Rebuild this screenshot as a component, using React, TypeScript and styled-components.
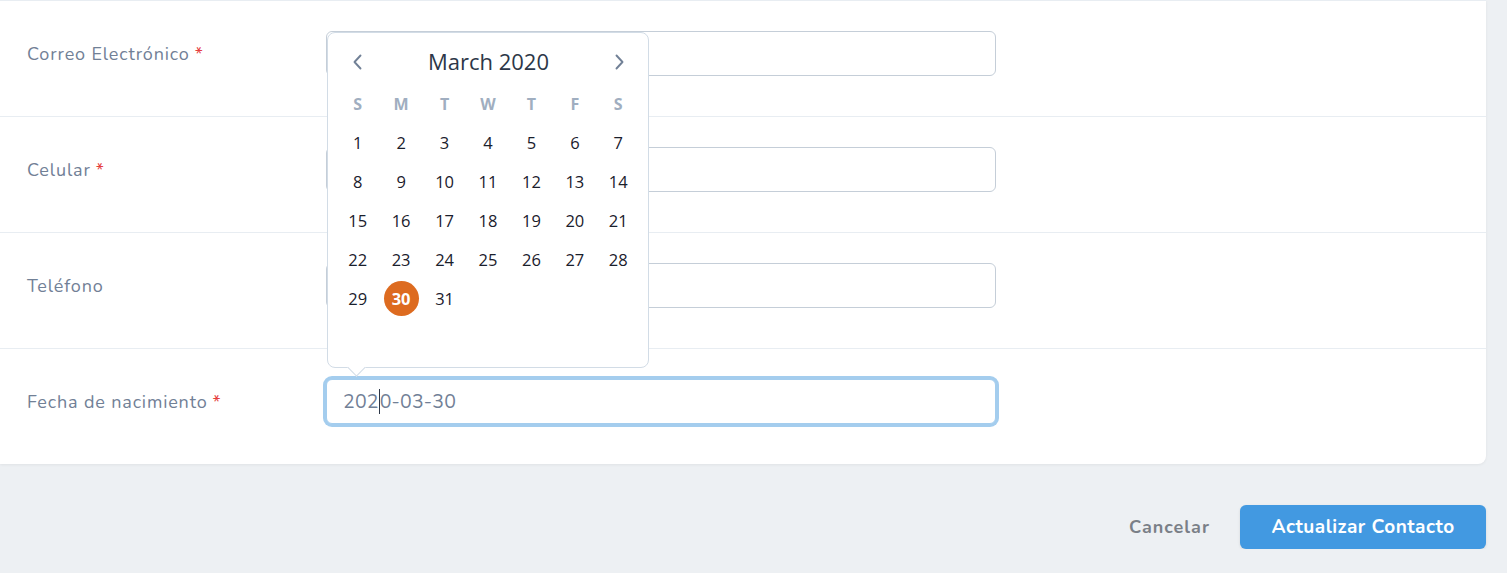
import React from "react";
import styled, { createGlobalStyle } from "styled-components";

const GlobalStyle = createGlobalStyle`
  body {
    margin: 0;
    background: #edf0f3;
    font-family: "Nunito", "Open Sans", sans-serif;
  }
`;

const fields = [
  { label: "Correo Electrónico", required: true, value: "" },
  { label: "Celular", required: true, value: "" },
  { label: "Teléfono", required: false, value: "" },
  { label: "Fecha de nacimiento", required: true, value: "2020-03-30", date: true },
];

const weekdays = ["S", "M", "T", "W", "T", "F", "S"];

const ChevronLeft = () => (
  <svg width="16" height="18" viewBox="0 0 16 18" fill="none">
    <path d="M10.5 2.5L4.5 9l6 6.5" stroke="#718096" strokeWidth="1.9" strokeLinecap="round" strokeLinejoin="round" />
  </svg>
);

const ChevronRight = () => (
  <svg width="16" height="18" viewBox="0 0 16 18" fill="none">
    <path d="M5.5 2.5l6 6.5-6 6.5" stroke="#718096" strokeWidth="1.9" strokeLinecap="round" strokeLinejoin="round" />
  </svg>
);

const Calendar: React.FC<{ selected: number }> = ({ selected }) => {
  // March 2020 starts on a Sunday, 6 rows shown
  const cells = Array.from({ length: 42 }, (_, i) => (i < 31 ? i + 1 : null));
  return (
    <Popover>
      <CalHeader>
        <NavButton>
          <ChevronLeft />
        </NavButton>
        <MonthTitle>March 2020</MonthTitle>
        <NavButton>
          <ChevronRight />
        </NavButton>
      </CalHeader>
      <CalGrid>
        {weekdays.map((d, i) => (
          <Weekday key={i}>{d}</Weekday>
        ))}
        {cells.map((d, i) => (
          <Day key={i} $selected={d === selected}>
            {d && <span>{d}</span>}
          </Day>
        ))}
      </CalGrid>
      <Arrow />
    </Popover>
  );
};

export default function App() {
  return (
    <>
      <GlobalStyle />
      <Page>
        <Card>
          {fields.map((f) => (
            <Row key={f.label}>
              <Label>
                {f.label}
                {f.required && <Star>*</Star>}
              </Label>
              <InputWrap>
                {f.date && <Calendar selected={30} />}
                <InputBox $focused={!!f.date}>
                  {f.date ? (
                    <>
                      202
                      <Caret />
                      0-03-30
                    </>
                  ) : (
                    f.value
                  )}
                </InputBox>
              </InputWrap>
            </Row>
          ))}
        </Card>
        <Footer>
          <CancelButton>Cancelar</CancelButton>
          <PrimaryButton>Actualizar Contacto</PrimaryButton>
        </Footer>
      </Page>
    </>
  );
}

const Page = styled.div`
  padding-right: 21px;
`;

const Card = styled.div`
  background: #fff;
  border-radius: 0 0 8px 0;
  box-shadow: 0 1px 3px rgba(0, 0, 0, 0.06);
`;

const Row = styled.div`
  display: grid;
  grid-template-columns: 299px 670px;
  align-items: center;
  padding: 30px 0 40px 27px;
  border-top: 1px solid #e8edf2;
`;

const Label = styled.div`
  font-size: 18px;
  letter-spacing: 0.85px;
  color: #718096;
`;

const Star = styled.span`
  color: #e53e3e;
  margin-left: 5px;
`;

const InputWrap = styled.div`
  position: relative;
`;

const InputBox = styled.div<{ $focused: boolean }>`
  box-sizing: border-box;
  height: 45px;
  border: 1px solid #c5ced8;
  border-radius: 6px;
  padding: 0 16px;
  display: flex;
  align-items: center;
  font-size: 19.5px;
  letter-spacing: 0.2px;
  color: #718096;
  background: #fff;
  ${({ $focused }) =>
    $focused &&
    `
    border-color: #a4cdee;
    box-shadow: 0 0 0 3px #a4cdee;
  `}
`;

const Caret = styled.span`
  display: inline-block;
  width: 1px;
  height: 25px;
  background: #2d3748;
`;

const Popover = styled.div`
  position: absolute;
  left: 1px;
  bottom: calc(100% + 11px);
  width: 322px;
  box-sizing: border-box;
  padding: 6px 8px 10px;
  background: #fff;
  border: 1px solid #d2dce6;
  border-radius: 8px;
  font-family: "Open Sans", "Noto Sans", sans-serif;
  z-index: 2;
`;

const Arrow = styled.div`
  position: absolute;
  left: 22px;
  bottom: -7px;
  width: 12px;
  height: 12px;
  background: #fff;
  border-right: 1px solid #d2dce6;
  border-bottom: 1px solid #d2dce6;
  transform: rotate(45deg);
`;

const CalHeader = styled.div`
  height: 45px;
  display: flex;
  align-items: center;
  justify-content: space-between;
  padding: 0 13px 0 14px;
`;

const NavButton = styled.div`
  display: flex;
  align-items: center;
`;

const MonthTitle = styled.div`
  font-size: 22px;
  color: #2d3748;
  margin-top: -2px;
`;

const CalGrid = styled.div`
  display: grid;
  grid-template-columns: repeat(7, 1fr);
  grid-auto-rows: 39px;
`;

const Weekday = styled.div`
  display: flex;
  align-items: center;
  justify-content: center;
  font-size: 16px;
  font-weight: 700;
  color: #a0aec0;
`;

const Day = styled.div<{ $selected: boolean }>`
  display: flex;
  align-items: center;
  justify-content: center;
  font-size: 16.5px;
  color: #1a202c;
  span {
    display: flex;
    align-items: center;
    justify-content: center;
    width: 35px;
    height: 35px;
    border-radius: 50%;
    background: ${({ $selected }) => ($selected ? "#dd6b20" : "transparent")};
    color: ${({ $selected }) => ($selected ? "#fff" : "#1a202c")};
    font-weight: ${({ $selected }) => ($selected ? 700 : 400)};
  }
`;

const Footer = styled.div`
  display: flex;
  justify-content: flex-end;
  align-items: center;
  gap: 30px;
  padding-top: 41px;
`;

const CancelButton = styled.button`
  border: none;
  background: none;
  padding: 0;
  font-family: inherit;
  font-size: 18px;
  letter-spacing: 1px;
  font-weight: 700;
  color: #7a7f87;
`;

const PrimaryButton = styled.button`
  width: 246px;
  height: 44px;
  border: none;
  border-radius: 6px;
  background: #4299e1;
  color: #fff;
  font-family: inherit;
  font-size: 19px;
  letter-spacing: 0.5px;
  font-weight: 700;
  box-shadow: 0 1px 3px rgba(0, 0, 0, 0.1);
`;
